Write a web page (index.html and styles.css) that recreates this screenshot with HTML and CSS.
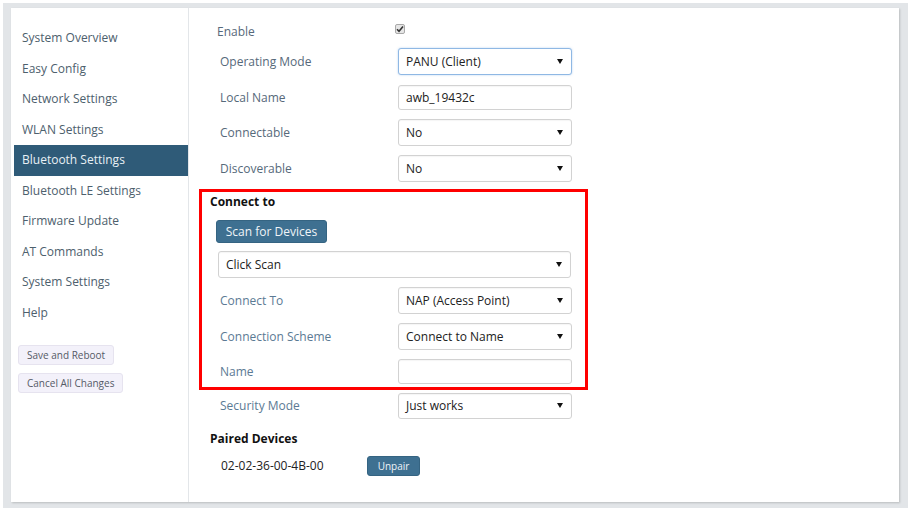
FILE: index.html
```html
<!DOCTYPE html>
<html>
<head>
<meta charset="utf-8">
<link rel="stylesheet" href="styles.css">
</head>
<body>
<div class="frame">
  <div class="panel">
    <aside class="sidebar">
      <nav class="nav">
        <div class="nav-item">System Overview</div>
        <div class="nav-item">Easy Config</div>
        <div class="nav-item">Network Settings</div>
        <div class="nav-item">WLAN Settings</div>
        <div class="nav-item active">Bluetooth Settings</div>
        <div class="nav-item">Bluetooth LE Settings</div>
        <div class="nav-item">Firmware Update</div>
        <div class="nav-item">AT Commands</div>
        <div class="nav-item">System Settings</div>
        <div class="nav-item">Help</div>
      </nav>
      <div class="side-buttons">
        <button class="side-btn">Save and Reboot</button>
        <button class="side-btn">Cancel All Changes</button>
      </div>
    </aside>
    <main class="main">
      <div class="row row-enable">
        <span class="label">Enable</span>
        <span class="checkbox"><svg width="8" height="8" viewBox="0 0 8 8"><path d="M1 4.2 L3 6.2 L7 1.5" fill="none" stroke="#333" stroke-width="1.6"/></svg></span>
      </div>
      <div class="row first">
        <span class="label">Operating Mode</span>
        <div class="select focus"><span>PANU (Client)</span><svg class="arrow" width="6" height="5" viewBox="0 0 6 5"><polygon points="0,0 6,0 3,5" fill="#111"/></svg></div>
      </div>
      <div class="row">
        <span class="label">Local Name</span>
        <div class="input">awb_19432c</div>
      </div>
      <div class="row">
        <span class="label">Connectable</span>
        <div class="select"><span>No</span><svg class="arrow" width="6" height="5" viewBox="0 0 6 5"><polygon points="0,0 6,0 3,5" fill="#111"/></svg></div>
      </div>
      <div class="row last-top">
        <span class="label">Discoverable</span>
        <div class="select"><span>No</span><svg class="arrow" width="6" height="5" viewBox="0 0 6 5"><polygon points="0,0 6,0 3,5" fill="#111"/></svg></div>
      </div>

      <section class="connect-box">
        <h3 class="heading">Connect to</h3>
        <button class="btn-primary scan">Scan for Devices</button>
        <div class="select wide"><span>Click Scan</span><svg class="arrow" width="6" height="5" viewBox="0 0 6 5"><polygon points="0,0 6,0 3,5" fill="#111"/></svg></div>
        <div class="row box-row">
          <span class="label blue">Connect To</span>
          <div class="select"><span>NAP (Access Point)</span><svg class="arrow" width="6" height="5" viewBox="0 0 6 5"><polygon points="0,0 6,0 3,5" fill="#111"/></svg></div>
        </div>
        <div class="row box-row">
          <span class="label blue">Connection Scheme</span>
          <div class="select"><span>Connect to Name</span><svg class="arrow" width="6" height="5" viewBox="0 0 6 5"><polygon points="0,0 6,0 3,5" fill="#111"/></svg></div>
        </div>
        <div class="row box-row name-row">
          <span class="label blue">Name</span>
          <div class="input"></div>
        </div>
      </section>

      <div class="row security">
        <span class="label blue">Security Mode</span>
        <div class="select"><span>Just works</span><svg class="arrow" width="6" height="5" viewBox="0 0 6 5"><polygon points="0,0 6,0 3,5" fill="#111"/></svg></div>
      </div>
      <h3 class="heading paired">Paired Devices</h3>
      <div class="device-row">
        <span class="device">02-02-36-00-4B-00</span>
        <button class="btn-primary unpair">Unpair</button>
      </div>
    </main>
  </div>
</div>
</body>
</html>
```

FILE: styles.css
```css
* { box-sizing: border-box; }
html, body { margin: 0; padding: 0; background: #fff; }
body {
  font-family: "Open Sans", "DejaVu Sans", sans-serif;
  padding: 3px;
}
.frame {
  width: 905px;
  height: 505px;
  background: #e2e5e8;
  padding: 5px 9px 6px 8px;
}
.panel {
  display: flex;
  height: 100%;
  background: #fff;
  box-shadow: 1px 1px 2px rgba(0,0,0,0.18);
}
.sidebar {
  width: 178px;
  border-right: 1px solid #e3e6e9;
  padding-top: 15px;
  flex-shrink: 0;
}
.nav-item {
  height: 30.5px;
  line-height: 30.5px;
  margin-left: 3px;
  padding-left: 8px;
  font-size: 12px;
  color: #4d606d;
}
.nav-item.active {
  background: #2f5b78;
  color: #e9f0f5;
}
.side-buttons {
  margin-top: 17px;
  padding-left: 7px;
  display: flex;
  flex-direction: column;
  align-items: flex-start;
  gap: 8px;
}
.side-btn {
  font-family: "Open Sans", "DejaVu Sans", sans-serif;
  font-size: 10px;
  color: #555a66;
  background: #f3f1fa;
  border: 1px solid #e6e3ef;
  border-radius: 3px;
  height: 20px;
  padding: 0 8px;
  line-height: 18px;
}
.main {
  flex: 1;
  padding: 13px 0 0 10px;
}
.row {
  display: flex;
  align-items: center;
  height: 27px;
  margin-bottom: 8.5px;
  padding-left: 21px;
}
.row-enable {
  height: 20px;
  padding-left: 18px;
  margin-bottom: 7px;
}
.row.last-top { margin-bottom: 7px; }
.label {
  width: 178px;
  flex-shrink: 0;
  font-size: 12px;
  color: #56697a;
}
.label.blue { color: #5b7a94; }
.checkbox {
  width: 10px;
  height: 10px;
  border: 1px solid #a9a9a9;
  background: #e6e6e6;
  border-radius: 2px;
  display: flex;
  align-items: center;
  justify-content: center;
  margin-top: -4px;
}
.select, .input {
  width: 174px;
  height: 27px;
  border: 1px solid #d2d2d2;
  border-radius: 3px;
  box-shadow: inset 0 1px 1px rgba(0,0,0,0.04);
  display: flex;
  align-items: center;
  justify-content: space-between;
  padding: 0 8px 0 7px;
  font-size: 12px;
  color: #222;
  background: #fff;
}
.input { height: 25px; }
.select.focus {
  border-color: #8fb8e4;
  box-shadow: 0 0 2px rgba(102,160,225,0.5);
}
.arrow { flex-shrink: 0; }
.connect-box {
  width: 389px;
  border: 3px solid #ff0000;
  padding: 2px 0 3px 0;
  margin-bottom: 3px;
}
.heading {
  margin: 0;
  font-size: 12px;
  font-weight: 700;
  color: #111;
  line-height: 16px;
  padding-left: 8px;
}
.btn-primary {
  font-family: "Open Sans", "DejaVu Sans", sans-serif;
  background: #3e7091;
  color: #f0f4f8;
  border: 1px solid #356482;
  border-radius: 3px;
}
.scan {
  display: block;
  margin: 10px 0 0 14px;
  height: 23px;
  width: 111px;
  font-size: 12px;
  padding: 0;
}
.select.wide {
  width: 353px;
  margin: 8px 0 9px 16px;
}
.box-row {
  padding-left: 18px;
  margin-bottom: 9px;
}
.box-row.name-row { margin-bottom: 0; height: 25px; }
.security { margin-bottom: 12px; height: 26px; }
.security .select { height: 26px; }
.heading.paired { padding-left: 11px; }
.device-row {
  display: flex;
  align-items: center;
  margin-top: 9px;
  height: 20px;
  padding-left: 22px;
}
.device {
  width: 146px;
  font-size: 12px;
  color: #222;
}
.unpair {
  height: 20px;
  width: 53px;
  font-size: 10px;
  padding: 0;
}
```
